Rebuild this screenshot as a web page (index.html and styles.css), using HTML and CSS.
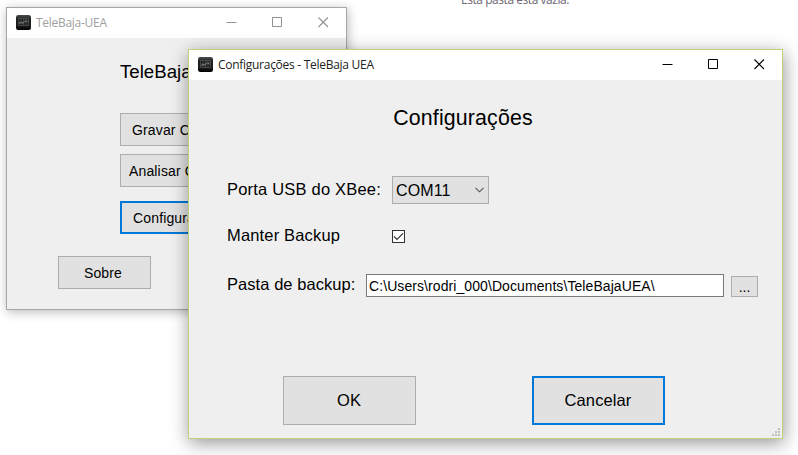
FILE: index.html
```html
<!DOCTYPE html>
<html lang="pt-BR">
<head>
<meta charset="utf-8">
<title>Configurações - TeleBaja UEA</title>
<link rel="stylesheet" href="styles.css">
</head>
<body>
<svg class="defs" width="0" height="0">
  <defs>
    <linearGradient id="body" x1="0" y1="0" x2="0" y2="1"><stop offset="0" stop-color="#4b4e4d"/><stop offset=".3" stop-color="#1c1e1d"/><stop offset=".7" stop-color="#1c1d1d"/><stop offset="1" stop-color="#000"/></linearGradient>
    <symbol id="app" viewBox="0 0 15 15">
      <rect width="15" height="15" rx="2.2" fill="url(#body)"/>
      <path d="M2.5 3.5h10v7h-10zM5 3.5v7M7.5 3.5v7M10 3.5v7M2.5 7h10" fill="none" stroke="#5c605f" stroke-width=".6"/>
      <path d="M3 9l2-2 1 1.5 2-1.5 1.5-1.5 1.5 1 1-1" fill="none" stroke="#9b9e9d" stroke-width=".7"/>
    </symbol>
    <symbol id="min" viewBox="0 0 11 11"><path d="M.5 5.5h10" stroke="currentColor"/></symbol>
    <symbol id="max" viewBox="0 0 11 11"><path d="M.5.5h9v9h-9z" fill="none" stroke="currentColor"/></symbol>
    <symbol id="close" viewBox="0 0 11 11"><path d="M.5.5l9.5 9.5M10 .5L.5 10" fill="none" stroke="currentColor" stroke-width="1.1"/></symbol>
  </defs>
</svg>
<main class="desktop">
  <p class="folder-note">Esta pasta está vazia.</p>

  <section class="window main-window">
    <header class="titlebar">
      <svg class="app-icon"><use href="#app"/></svg>
      <span class="caption">TeleBaja-UEA</span>
      <div class="controls">
        <svg><use href="#min"/></svg><svg><use href="#max"/></svg><svg><use href="#close"/></svg>
      </div>
    </header>
    <div class="main-body">
      <h1 class="main-heading">TeleBaja</h1>
      <div class="menu">
        <button class="btn record">Gravar C</button>
        <button class="btn analyse">Analisar C</button>
        <button class="btn configure focused">Configura</button>
      </div>
      <button class="btn about">Sobre</button>
    </div>
  </section>

  <section class="window config-window">
    <header class="titlebar">
      <svg class="app-icon"><use href="#app"/></svg>
      <span class="caption">Configurações - TeleBaja UEA</span>
      <div class="controls">
        <svg><use href="#min"/></svg><svg><use href="#max"/></svg><svg><use href="#close"/></svg>
      </div>
    </header>
    <div class="config-body">
      <h2 class="config-heading">Configurações</h2>
      <div class="row port-row">
        <span class="label port-label">Porta USB do XBee:</span>
        <div class="select"><span>COM11</span>
          <svg width="9" height="6" viewBox="0 0 9 6"><path d="M.5.8l4 4 4-4" fill="none" stroke="#555" stroke-width="1.1"/></svg>
        </div>
      </div>
      <div class="row backup-row">
        <span class="label backup-label">Manter Backup</span>
        <span class="checkbox"><svg width="11" height="11" viewBox="0 0 11 11"><path d="M1 5.5l3 3 6-6.2" fill="none" stroke="#333" stroke-width="1.2"/></svg></span>
      </div>
      <div class="row path-row">
        <span class="label path-label">Pasta de backup:</span>
        <div class="path">C:\Users\rodri_000\Documents\TeleBajaUEA\</div>
        <button class="btn browse">...</button>
      </div>
      <div class="actions">
        <button class="btn action">OK</button>
        <button class="btn action focused">Cancelar</button>
      </div>
    </div>
    <svg class="grip" width="8" height="8" viewBox="0 0 8 8"><path d="M6 0h2v2h-2zM3 3h2v2h-2zM6 3h2v2h-2zM0 6h2v2h-2zM3 6h2v2h-2zM6 6h2v2h-2z" fill="#bfbfbf" shape-rendering="crispEdges"/></svg>
  </section>
</main>
</body>
</html>
```
FILE: styles.css
```css
* { box-sizing: border-box; }
body { margin: 0; background: #fff; font-family: "Liberation Sans", Arial, sans-serif; color: #000; }
h1, h2, p { margin: 0; font-weight: 400; }
.defs { position: absolute; }
.desktop { position: relative; width: 798px; height: 455px; overflow: hidden; }
.folder-note { position: absolute; left: 461px; top: -9px; font: 12px/18px "Open Sans", sans-serif; letter-spacing: -.45px; color: #6d6875; white-space: nowrap; }

.window { position: absolute; display: flex; flex-direction: column; background: #efefef; border: 1px solid #a6a6a6; }
.main-window { left: 6px; top: 7px; width: 341px; height: 303px; box-shadow: 1px 2px 10px rgba(0, 0, 0, .28); }
.config-window { left: 188px; top: 49px; width: 595px; height: 390px; border-color: #bcd37c; box-shadow: 1px 4px 17px rgba(0, 0, 0, .42); }

.titlebar { display: flex; align-items: center; flex: none; height: 30px; padding-left: 9px; background: #fff; }
.app-icon { width: 15px; height: 15px; flex: none; margin-top: -1px; }
.caption { margin-left: 5px; font: 12px/16px "Open Sans", sans-serif; letter-spacing: -.28px; white-space: nowrap; color: #222; }
.main-window .caption { color: #a0a0a0; }
.controls { display: flex; gap: 35px; margin-left: auto; margin-right: 17px; margin-top: -1px; }
.controls svg { width: 11px; height: 11px; }
.main-window .controls { color: #929292; }

.btn { display: flex; align-items: center; justify-content: center; margin: 0; padding: 0; background: #e1e1e1; border: 1px solid #adadad; border-radius: 0; font: 14px/18px "Liberation Sans", Arial, sans-serif; color: #000; white-space: nowrap; }
.btn.focused { border: 2px solid #0078d7; }

.main-body { display: flex; flex-direction: column; align-items: flex-start; }
.main-heading { margin: 22px 0 0 113px; font-size: 18.67px; line-height: 24px; }
.menu { display: flex; flex-direction: column; margin: 29px 0 0 113px; }
.menu .btn { width: 115px; height: 33px; justify-content: flex-start; letter-spacing: .15px; }
.menu .record { padding-left: 11px; }
.menu .analyse { margin-top: 8px; padding-left: 8px; }
.menu .configure { margin-top: 14px; padding-left: 11px; }
.about { width: 93px; height: 33px; margin: 22px 0 0 51px; padding-right: 3px; letter-spacing: .15px; }

.config-body { display: flex; flex-direction: column; }
.config-heading { align-self: center; margin: 24px 0 0 -45px; font-size: 21.33px; line-height: 28px; letter-spacing: .16px; }
.row { display: flex; align-items: center; padding-left: 38px; }
.label { flex: none; font-size: 16.5px; line-height: 20px; white-space: nowrap; }
.port-label { width: 165px; margin-top: -2px; letter-spacing: .2px; }
.backup-label { width: 165px; margin-top: -1px; letter-spacing: .16px; }
.path-label { width: 139px; margin-top: -4px; letter-spacing: .06px; }
.port-row { margin-top: 44px; height: 28px; }
.select { display: flex; align-items: center; justify-content: space-between; width: 97px; height: 28px; padding: 0 4px 0 3px; background: #e1e1e1; border: 1px solid #adadad; font-size: 16px; line-height: 20px; letter-spacing: .1px; }
.select span { margin-top: 2px; }
.backup-row { margin-top: 21px; height: 20px; }
.checkbox { width: 13px; height: 13px; margin-top: 2px; border: 1px solid #333; background: #fff; }
.checkbox svg { display: block; }
.path-row { margin-top: 29px; height: 23px; }
.path { width: 358px; height: 23px; padding-left: 2px; border: 1px solid #7a7a7a; background: #fff; font-size: 14px; line-height: 22px; letter-spacing: .08px; white-space: nowrap; }
.browse { width: 27px; height: 21px; margin: 2px 0 0 7px; }
.actions { display: flex; gap: 116px; margin: 79px 0 0 94px; }
.action { width: 133px; height: 49px; padding: 0 1px 2px 0; font-size: 16.5px; letter-spacing: .1px; }
.grip { position: absolute; right: 2px; bottom: 2px; }
```
